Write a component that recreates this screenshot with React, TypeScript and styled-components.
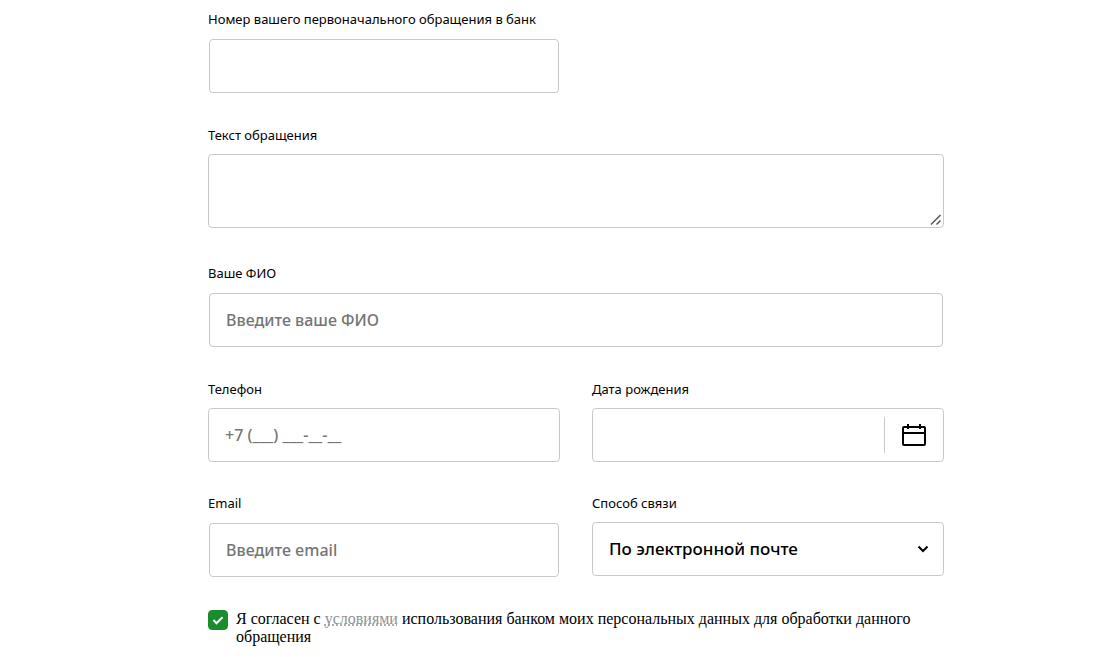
import React from "react";
import styled, { createGlobalStyle, css } from "styled-components";

const GlobalStyle = createGlobalStyle`
  *, *::before, *::after { box-sizing: border-box; }
  body {
    margin: 0;
    background: #fff;
    color: #000;
    font-family: "Noto Sans", "Open Sans", sans-serif;
  }
`;

const Page = styled.main`
  padding: 10px 0 10px 45px;
`;

const Form = styled.form`
  display: flex;
  flex-direction: column;
  gap: 32px;
  max-width: 736px;
  margin: 0 auto;
`;

const Columns = styled.div`
  display: grid;
  grid-template-columns: 1fr 1fr;
  align-items: start;
  gap: 32px;
`;

const Field = styled.div`
  display: flex;
  flex-direction: column;
  gap: 10px;
  min-width: 0;
`;

const Label = styled.label`
  font-size: 13px;
  line-height: 18px;
`;

const frame = css`
  border: 1px solid #c9c9c9;
  border-radius: 4px;
  background: #fff;
`;

const controlText = css`
  color: #000;
  font-family: inherit;
  font-size: 16px;
  font-weight: 500;
  line-height: 24px;

  &::placeholder {
    color: #757575;
    opacity: 1;
  }
`;

const TextInput = styled.input<{ $inset?: boolean }>`
  ${frame}
  ${controlText}
  height: 54px;
  margin: ${(p) => (p.$inset ? "1px" : "0")};
  padding: 0 16px;
`;

const TextAreaBox = styled.div`
  display: grid;
  margin-bottom: 4px;

  & > * {
    grid-area: 1 / 1;
  }

  & > svg {
    place-self: end;
    margin: 2px;
    pointer-events: none;
  }
`;

const TextArea = styled.textarea`
  ${frame}
  ${controlText}
  display: block;
  width: 100%;
  height: 74px;
  margin: 0;
  padding: 12px 16px;
  resize: both;

  &::-webkit-resizer {
    background: transparent;
  }
`;

const DateBox = styled.div`
  ${frame}
  display: flex;
  align-items: center;
  height: 54px;
`;

const DateInput = styled.input`
  ${controlText}
  flex: 1;
  min-width: 0;
  height: 100%;
  padding: 0 16px;
  border: 0;
  background: transparent;
`;

const CalendarButton = styled.button`
  display: flex;
  align-items: center;
  justify-content: center;
  width: 59px;
  height: 36px;
  padding: 0;
  border: 0;
  border-left: 1px solid #c9c9c9;
  background: transparent;
  color: #000;
`;

const SelectBox = styled.div`
  display: grid;
  align-items: center;

  & > * {
    grid-area: 1 / 1;
  }

  & > svg {
    justify-self: end;
    margin-right: 15px;
    pointer-events: none;
  }
`;

const Select = styled.select`
  ${frame}
  ${controlText}
  appearance: none;
  width: 100%;
  height: 54px;
  padding: 0 40px 0 16px;
  font-size: 17px;
`;

const Consent = styled.div`
  display: flex;
  align-items: flex-start;
  gap: 8px;
`;

const CheckBox = styled.span`
  display: grid;
  flex: none;
  width: 20px;
  height: 20px;

  & > * {
    grid-area: 1 / 1;
  }

  & > svg {
    pointer-events: none;
  }
`;

const CheckInput = styled.input`
  appearance: none;
  width: 20px;
  height: 20px;
  margin: 0;
  border: 1px solid #c9c9c9;
  border-radius: 4px;

  &:checked {
    border-color: #198d2c;
    background: #198d2c;
  }
`;

const ConsentText = styled.label`
  font-family: "Liberation Serif", "Times New Roman", serif;
  font-size: 16px;
  line-height: 18px;
`;

const TermsLink = styled.a`
  color: #919191;
  text-decoration: underline dotted;
  text-decoration-skip-ink: none;
`;

const GripIcon = () => (
  <svg width="12" height="12" viewBox="0 0 12 12" fill="none" stroke="#555" strokeWidth="1.500" aria-hidden="true">
    <path d="M1 10.500 10.500 1M6.500 10.500l4-4" />
  </svg>
);

const CalendarIcon = () => (
  <svg width="24" height="22" viewBox="0 0 24 22" fill="none" stroke="currentColor" strokeWidth="2" aria-hidden="true">
    <rect x="1" y="3" width="22" height="18" rx="1" />
    <path d="M1 9h22M6 0v5M18 0v5" />
  </svg>
);

const ChevronIcon = () => (
  <svg width="12" height="8" viewBox="0 0 12 8" fill="none" stroke="#000" strokeWidth="2" aria-hidden="true">
    <path d="M1.500 1.500 6 6l4.500-4.500" />
  </svg>
);

const CheckIcon = () => (
  <svg width="20" height="20" viewBox="0 0 20 20" fill="none" stroke="#fff" strokeWidth="2" aria-hidden="true">
    <path d="m5.500 10 3 3.200 6-6" />
  </svg>
);

export default function App() {
  return (
    <>
      <GlobalStyle />
      <Page>
        <Form>
          <Columns>
            <Field>
              <Label htmlFor="request">Номер вашего первоначального обращения в банк</Label>
              <TextInput $inset id="request" type="text" />
            </Field>
          </Columns>
          <Field>
            <Label htmlFor="message">Текст обращения</Label>
            <TextAreaBox>
              <TextArea id="message" />
              <GripIcon />
            </TextAreaBox>
          </Field>
          <Field>
            <Label htmlFor="name">Ваше ФИО</Label>
            <TextInput $inset id="name" type="text" placeholder="Введите ваше ФИО" />
          </Field>
          <Columns>
            <Field>
              <Label htmlFor="phone">Телефон</Label>
              <TextInput id="phone" type="tel" placeholder="+7 (___) ___-__-__" />
            </Field>
            <Field>
              <Label htmlFor="birth">Дата рождения</Label>
              <DateBox>
                <DateInput id="birth" type="text" />
                <CalendarButton type="button" aria-label="Открыть календарь">
                  <CalendarIcon />
                </CalendarButton>
              </DateBox>
            </Field>
          </Columns>
          <Columns>
            <Field>
              <Label htmlFor="email">Email</Label>
              <TextInput $inset id="email" type="email" placeholder="Введите email" />
            </Field>
            <Field>
              <Label htmlFor="contact">Способ связи</Label>
              <SelectBox>
                <Select id="contact" defaultValue="email">
                  <option value="email">По электронной почте</option>
                </Select>
                <ChevronIcon />
              </SelectBox>
            </Field>
          </Columns>
          <Consent>
            <CheckBox>
              <CheckInput id="consent" type="checkbox" defaultChecked />
              <CheckIcon />
            </CheckBox>
            <ConsentText htmlFor="consent">
              Я согласен с <TermsLink href="#terms">условиями</TermsLink> использования банком моих персональных данных для
              обработки данного обращения
            </ConsentText>
          </Consent>
        </Form>
      </Page>
    </>
  );
}
